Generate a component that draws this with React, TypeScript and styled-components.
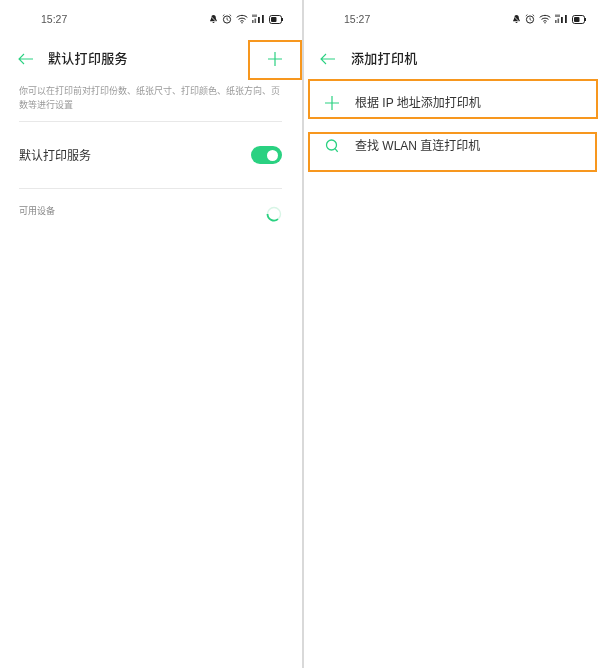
import { createGlobalStyle } from 'styled-components';
import styled from 'styled-components';

const GREEN = '#2ad181';
const ORANGE = '#f7971e';

const GlobalStyle = createGlobalStyle`
  html, body {
    margin: 0;
    padding: 0;
    background: #ffffff;
  }
  body {
    font-family: "Liberation Sans", "Noto Sans CJK SC", sans-serif;
  }
`;

const Page = styled.div`
  width: 600px;
  height: 668px;
  display: flex;
  overflow: hidden;
  background: #fff;
  filter: blur(0.3px);
`;

const Screen = styled.div<{ $width: number }>`
  width: ${(p) => p.$width}px;
  flex-shrink: 0;
  display: flex;
  flex-direction: column;
`;

const Divider = styled.div`
  width: 2px;
  flex-shrink: 0;
  background: #d9d9d9;
`;

const StatusBar = styled.div<{ $left: number; $right: number }>`
  height: 38px;
  display: flex;
  align-items: center;
  justify-content: space-between;
  padding: 0 ${(p) => p.$right}px 0 ${(p) => p.$left}px;
  font-size: 10.5px;
  color: #555;
  box-sizing: border-box;
`;

const StatusIcons = styled.div`
  display: flex;
  align-items: center;
  gap: 4px;
  color: #222;
`;

const Header = styled.div<{ $left: number }>`
  height: 41px;
  display: flex;
  align-items: center;
  padding-left: ${(p) => p.$left}px;
  position: relative;
`;

const Title = styled.div<{ $gap: number }>`
  margin: 0 0 2px ${(p) => p.$gap}px;
  font-size: 13px;
  font-weight: 500;
  color: #222;
  letter-spacing: 0.3px;
`;

const AddBox = styled.div`
  position: absolute;
  top: 2px;
  right: 0;
  width: 54px;
  height: 40px;
  box-sizing: border-box;
  border: 2px solid ${ORANGE};
  padding-bottom: 2px;
  display: flex;
  align-items: center;
  justify-content: center;
`;

const Description = styled.div`
  margin: 5px 20px 0 19px;
  font-size: 9px;
  line-height: 14px;
  color: #9a9a9a;
  height: 37px;
`;

const Rule = styled.div`
  height: 1px;
  margin: 0 20px 0 19px;
  background: #e8e8e8;
`;

const SwitchRow = styled.div`
  height: 66px;
  display: flex;
  align-items: center;
  justify-content: space-between;
  margin: 0 20px 0 19px;
  font-size: 12px;
  color: #333;
`;

const SwitchLabel = styled.span`
  margin-bottom: 2px;
`;

const Toggle = styled.div`
  width: 31px;
  height: 18px;
  border-radius: 9px;
  background: ${GREEN};
  display: flex;
  align-items: center;
  justify-content: flex-end;
  padding-right: 4px;
  box-sizing: border-box;
`;

const Knob = styled.div`
  width: 11px;
  height: 11px;
  border-radius: 50%;
  background: #fff;
`;

const DevicesRow = styled.div`
  display: flex;
  align-items: flex-start;
  justify-content: space-between;
  margin: 17px 20px 0 19px;
  font-size: 9px;
  line-height: 11px;
  color: #888;
`;

const OptionBox = styled.div<{ $height: number; $width: number; $pad: number; $top: number }>`
  width: ${(p) => p.$width}px;
  height: ${(p) => p.$height}px;
  margin: ${(p) => p.$top}px 0 0 4px;
  box-sizing: border-box;
  border: 2px solid ${ORANGE};
  display: flex;
  align-items: flex-start;
  padding: ${(p) => p.$pad}px 0 0 15px;
  font-size: 12px;
  line-height: 16px;
  color: #333;
`;

const OptionIcon = styled.div`
  width: 30px;
  height: 16px;
  display: flex;
  align-items: center;
`;

const ArrowIcon = () => (
  <svg width="15" height="12" viewBox="0 0 15 12" fill="none" stroke={GREEN} strokeWidth="1.1">
    <path d="M15 6H1M6 1 1 6l5 5" />
  </svg>
);

const PlusIcon = () => (
  <svg width="14" height="14" viewBox="0 0 14 14" fill="none" stroke={GREEN} strokeWidth="1.2">
    <path d="M7 0v14M0 7h14" />
  </svg>
);

const SearchIcon = () => (
  <svg width="14" height="14" viewBox="0 0 14 14" fill="none" stroke={GREEN} strokeWidth="1.3">
    <circle cx="6.5" cy="6" r="5" />
    <path d="M10.3 9.8l2.4 3" />
  </svg>
);

const Spinner = () => (
  <svg width="16" height="16" viewBox="0 0 16 16" fill="none">
    <circle cx="8" cy="8" r="6.5" stroke="#d8f5e6" strokeWidth="1.4" />
    <path d="M1.5 8a6.5 6.5 0 0 0 10.5 5.1" stroke={GREEN} strokeWidth="1.8" />
  </svg>
);

const StatusGlyphs = () => (
  <StatusIcons>
    <svg width="9" height="10" viewBox="0 0 9 10" fill="currentColor">
      <path d="M4.5 1C3 1 2.2 2.2 2.2 3.6 2.2 5.4 1 6.3 1 7.2h7c0-.9-1.2-1.8-1.2-3.6C6.8 2.2 6 1 4.5 1zM3.5 8h2a1 1 0 0 1-2 0z" />
      <path d="M1 1.5l7 7" stroke="#fff" strokeWidth=".8" />
    </svg>
    <svg width="10" height="10" viewBox="0 0 10 10" fill="none" stroke="currentColor" strokeWidth="1">
      <circle cx="5" cy="5.5" r="3.6" />
      <path d="M5 3.6v2l1.3.8M.8 2 2.4.6M9.2 2 7.6.6" strokeWidth=".8" />
    </svg>
    <svg width="12" height="10" viewBox="0 0 12 10" fill="none" stroke="currentColor" strokeWidth="1">
      <path d="M.7 3.4C3.7.7 8.3.7 11.3 3.4M2.5 5.4c2-1.7 5-1.7 7 0M4.3 7.3c1-.8 2.4-.8 3.4 0" />
      <circle cx="6" cy="8.8" r=".7" fill="currentColor" stroke="none" />
    </svg>
    <svg width="13" height="10" viewBox="0 0 13 10" fill="currentColor">
      <rect x="0" y="6" width="1.6" height="3" opacity=".7" />
      <rect x="2.5" y="4.5" width="1.6" height="4.5" opacity=".7" />
      <rect x="0" y="0.5" width="5" height="2.5" opacity=".55" />
      <rect x="6" y="3" width="1.8" height="6" />
      <rect x="10" y="1" width="1.8" height="8" />
    </svg>
    <svg width="14" height="9" viewBox="0 0 14 9" fill="none">
      <rect x=".5" y=".5" width="12" height="8" rx="2.2" stroke="currentColor" />
      <rect x="2" y="2" width="5.5" height="5" rx="1" fill="currentColor" />
      <rect x="13" y="3" width="1" height="3" fill="currentColor" />
    </svg>
  </StatusIcons>
);

const App = () => (
  <Page>
    <GlobalStyle />
    <Screen $width={302}>
      <StatusBar $left={41} $right={19}>
        15:27
        <StatusGlyphs />
      </StatusBar>
      <Header $left={18}>
        <ArrowIcon />
        <Title $gap={15}>默认打印服务</Title>
        <AddBox>
          <PlusIcon />
        </AddBox>
      </Header>
      <Description>你可以在打印前对打印份数、纸张尺寸、打印颜色、纸张方向、页数等进行设置</Description>
      <Rule />
      <SwitchRow>
        <SwitchLabel>默认打印服务</SwitchLabel>
        <Toggle>
          <Knob />
        </Toggle>
      </SwitchRow>
      <Rule />
      <DevicesRow>
        可用设备
        <Spinner />
      </DevicesRow>
    </Screen>
    <Divider />
    <Screen $width={296}>
      <StatusBar $left={40} $right={14}>
        15:27
        <StatusGlyphs />
      </StatusBar>
      <Header $left={16}>
        <ArrowIcon />
        <Title $gap={16}>添加打印机</Title>
      </Header>
      <OptionBox $width={290} $height={40} $pad={14} $top={0}>
        <OptionIcon>
          <PlusIcon />
        </OptionIcon>
        根据 IP 地址添加打印机
      </OptionBox>
      <OptionBox $width={289} $height={40} $pad={4} $top={13}>
        <OptionIcon>
          <SearchIcon />
        </OptionIcon>
        查找 WLAN 直连打印机
      </OptionBox>
    </Screen>
  </Page>
);

export default App;
